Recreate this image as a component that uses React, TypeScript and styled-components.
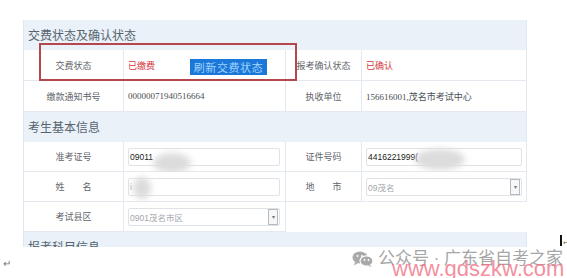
import React from 'react';
import styled, { createGlobalStyle } from 'styled-components';

const GlobalStyle = createGlobalStyle`
  html, body {
    margin: 0;
    padding: 0;
    background: #ffffff;
  }
  body {
    font-family: "Noto Sans CJK SC", "Liberation Sans", sans-serif;
  }
`;

const Page = styled.div`
  position: relative;
  width: 567px;
  height: 278px;
  overflow: hidden;
  padding-top: 20px;
  box-sizing: border-box;
  background: #ffffff;
`;

const Panel = styled.div`
  position: relative;
  width: 504px;
  margin-left: 23px;
  border-left: 1px solid #e1e7ee;
  box-sizing: border-box;
`;

const SectionHeader = styled.div<{ $h?: number }>`
  height: ${p => p.$h ?? 30}px;
  overflow: hidden;
  background: #eaf1f8;
  border-right: 1px solid #e1e7ee;
  box-sizing: border-box;
  padding-left: 4px;
  line-height: 30px;
  font-size: 12px;
  color: #56646f;
  white-space: nowrap;
`;

const Grid = styled.div<{ $rowH: number }>`
  display: grid;
  grid-template-columns: 100px 162px 76px 165px;
  grid-auto-rows: ${p => p.$rowH}px;
`;

const Cell = styled.div<{ $label?: boolean; $blank?: boolean; $span?: number }>`
  display: flex;
  align-items: center;
  justify-content: ${p => (p.$label ? 'center' : 'flex-start')};
  padding: ${p => (p.$label ? '0' : '0 4px')};
  box-sizing: border-box;
  border-bottom: ${p => (p.$blank ? 'none' : '1px solid #e4e9ef')};
  border-right: ${p => (p.$blank ? 'none' : '1px solid #e4e9ef')};
  grid-column: ${p => (p.$span ? `span ${p.$span}` : 'auto')};
  background: #ffffff;
  font-size: 9px;
  color: #5f656b;
  white-space: nowrap;
  position: relative;
`;

const Red = styled.span`
  color: #d4363d;
  font-size: 9px;
`;

const Serif = styled.span`
  font-family: "Liberation Serif", "Noto Sans CJK SC", serif;
  font-size: 9px;
  color: #4a4f55;
`;

const RefreshButton = styled.span`
  margin-left: 35px;
  margin-top: 4px;
  display: inline-block;
  width: 77px;
  height: 16px;
  line-height: 16px;
  text-align: center;
  background: #1b77d8;
  color: #9fd4ff;
  font-size: 11px;
  letter-spacing: 0.6px;
`;

const Input = styled.div<{ $w: number }>`
  width: ${p => p.$w}px;
  height: 18px;
  border: 1px solid #dfe3e8;
  border-radius: 2px;
  box-sizing: border-box;
  background: #ffffff;
  display: flex;
  align-items: center;
  padding-left: 1px;
  font-family: "Liberation Sans", "Noto Sans CJK SC", sans-serif;
  font-size: 8.5px;
  color: #222;
  position: relative;
`;

const SelectText = styled.span`
  flex: 1;
  color: #a3a8ad;
  font-size: 8.5px;
  font-family: "Liberation Sans", "Noto Sans CJK SC", sans-serif;
`;

const Caret = styled.span`
  width: 10px;
  height: 16px;
  margin-right: 1px;
  border: 1px solid #b5bac0;
  box-sizing: border-box;
  background: #f6f7f8;
  display: flex;
  align-items: center;
  justify-content: center;
  font-size: 6px;
  color: #777;
`;

const Blob = styled.div<{ $x: number; $y: number; $w: number; $h: number }>`
  position: absolute;
  left: ${p => p.$x}px;
  top: ${p => p.$y}px;
  width: ${p => p.$w}px;
  height: ${p => p.$h}px;
  border-radius: 50%;
  background: #dcdcdc;
  filter: blur(3px);
`;

const Highlight = styled.div`
  position: absolute;
  left: 15px;
  top: 23px;
  width: 258px;
  height: 38px;
  border: 2px solid #b4464e;
  box-sizing: border-box;
  pointer-events: none;
`;

const ReturnMark = styled.div`
  margin-top: 10px;
  padding-left: 3px;
  font-size: 10px;
  line-height: 12px;
  color: #777;
`;

const Watermark = styled.div`
  position: absolute;
  left: 352px;
  top: 249px;
  display: flex;
  align-items: center;
  gap: 4px;
  color: #a6a6a6;
  font-family: "Liberation Sans", "Noto Sans CJK SC", sans-serif;
  font-size: 17px;
  line-height: 20px;
  white-space: nowrap;
`;

const Site = styled.div`
  position: absolute;
  left: 392px;
  top: 258px;
  font-family: "Liberation Sans", sans-serif;
  font-size: 22px;
  line-height: 22px;
  color: rgba(240, 112, 132, 0.8);
  white-space: nowrap;
`;

const Cursor = styled.div`
  position: absolute;
  left: 560px;
  top: 235px;
  display: flex;
  align-items: flex-end;
  gap: 1px;
  font-size: 7px;
  line-height: 8px;
  color: #666;
  &::before {
    content: "";
    width: 2px;
    height: 11px;
    background: #111;
  }
`;

const WeChat = () => (
  <svg width="22" height="16" viewBox="0 0 22 16">
    <ellipse cx="8" cy="6.5" rx="7.5" ry="6" fill="#a9a9a9" />
    <path d="M3 11 L2 14.5 L6 12 Z" fill="#a9a9a9" />
    <ellipse cx="14.5" cy="10" rx="6.5" ry="5.2" fill="#a9a9a9" stroke="#ffffff" strokeWidth="1.2" />
    <path d="M18 14 L19.5 16 L16 14.8 Z" fill="#a9a9a9" />
    <circle cx="5.5" cy="5" r="1" fill="#fff" />
    <circle cx="10" cy="5" r="1" fill="#fff" />
    <circle cx="12.5" cy="9" r="0.9" fill="#fff" />
    <circle cx="16.5" cy="9" r="0.9" fill="#fff" />
  </svg>
);

export default function App() {
  return (
    <>
      <GlobalStyle />
      <Page>
        <Panel>
          <SectionHeader>交费状态及确认状态</SectionHeader>
          <Grid $rowH={31}>
            <Cell $label>交费状态</Cell>
            <Cell>
              <Red>已缴费</Red>
              <RefreshButton>刷新交费状态</RefreshButton>
            </Cell>
            <Cell $label>报考确认状态</Cell>
            <Cell>
              <Red>已确认</Red>
            </Cell>
            <Cell $label>缴款通知书号</Cell>
            <Cell>
              <Serif>00000071940516664</Serif>
            </Cell>
            <Cell $label>执收单位</Cell>
            <Cell>
              <Serif>156616001,茂名市考试中心</Serif>
            </Cell>
          </Grid>
          <SectionHeader>考生基本信息</SectionHeader>
          <Grid $rowH={30}>
            <Cell $label>准考证号</Cell>
            <Cell>
              <Input $w={152}>
                09011
                <Blob $x={24} $y={4} $w={38} $h={20} />
              </Input>
            </Cell>
            <Cell $label>证件号码</Cell>
            <Cell>
              <Input $w={156}>
                4416221999(
                <Blob $x={48} $y={0} $w={50} $h={21} />
              </Input>
            </Cell>
            <Cell $label>姓　　名</Cell>
            <Cell>
              <Input $w={152}>
                <SelectText>i</SelectText>
                <Blob $x={4} $y={-2} $w={18} $h={22} />
              </Input>
            </Cell>
            <Cell $label>地　　市</Cell>
            <Cell>
              <Input $w={156}>
                <SelectText>09茂名</SelectText>
                <Caret>▾</Caret>
              </Input>
            </Cell>
            <Cell $label>考试县区</Cell>
            <Cell>
              <Input $w={152}>
                <SelectText>0901茂名市区</SelectText>
                <Caret>▾</Caret>
              </Input>
            </Cell>
            <Cell $blank $span={2} />
          </Grid>
          <SectionHeader $h={15}>报考科目信息</SectionHeader>
          <Highlight />
        </Panel>
        <ReturnMark>↵</ReturnMark>
        <Cursor>↵</Cursor>
        <Watermark>
          <WeChat />
          <span>公众号 · 广东省自考之家</span>
        </Watermark>
        <Site>www.gdszkw.com</Site>
      </Page>
    </>
  );
}
